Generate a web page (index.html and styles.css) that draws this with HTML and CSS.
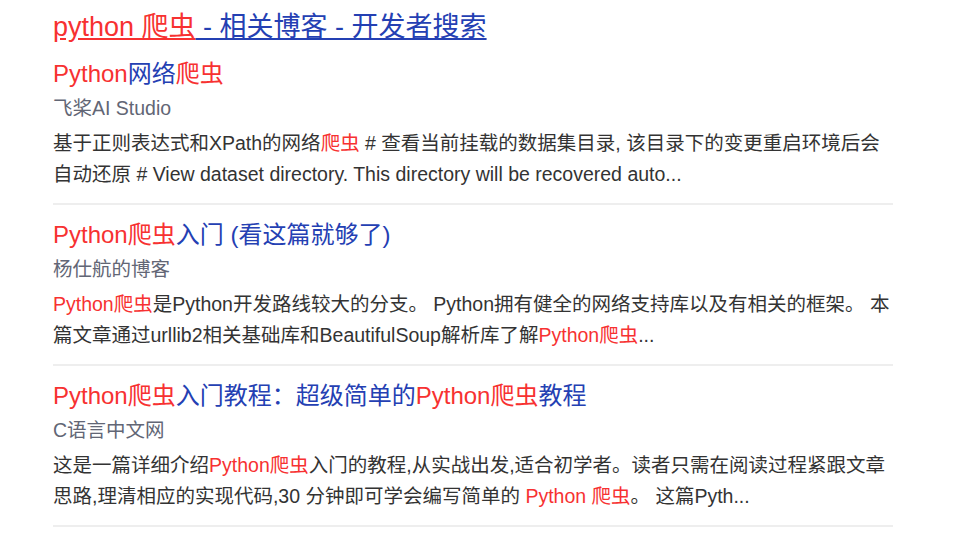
FILE: index.html
```html
<!DOCTYPE html>
<html lang="zh-CN">

<head>
    <meta charset="UTF-8">
    <meta name="viewport" content="width=device-width, initial-scale=1.0">
    <title>python 爬虫 - 相关博客 - 开发者搜索</title>
    <link rel="stylesheet" href="styles.css">
</head>

<body>
    <div class="container">
        <h1 class="search-title">
            <a href="#"><span class="hl">python 爬虫</span><span class="rest"> - 相关博客 - 开发者搜索</span></a>
        </h1>

        <div class="result-list">
            <div class="result">
                <h2 class="result-title"><a href="#"><em>Python</em>网络<em>爬虫</em></a></h2>
                <div class="result-source">飞桨AI Studio</div>
                <p class="result-desc">基于正则表达式和XPath的网络<em>爬虫</em> # 查看当前挂载的数据集目录, 该目录下的变更重启环境后会自动还原 # View dataset directory. This directory will be recovered auto...</p>
            </div>

            <div class="result">
                <h2 class="result-title"><a href="#"><em>Python爬虫</em>入门 (看这篇就够了)</a></h2>
                <div class="result-source">杨仕航的博客</div>
                <p class="result-desc"><em>Python爬虫</em>是Python开发路线较大的分支。 Python拥有健全的网络支持库以及有相关的框架。 本篇文章通过urllib2相关基础库和BeautifulSoup解析库了解<em>Python爬虫</em>...</p>
            </div>

            <div class="result">
                <h2 class="result-title"><a href="#"><em>Python爬虫</em>入门教程：超级简单的<em>Python爬虫</em>教程</a></h2>
                <div class="result-source">C语言中文网</div>
                <p class="result-desc">这是一篇详细介绍<em>Python爬虫</em>入门的教程,从实战出发,适合初学者。读者只需在阅读过程紧跟文章思路,理清相应的实现代码,30 分钟即可学会编写简单的 <em>Python 爬虫</em>。 这篇Pyth...</p>
            </div>
        </div>
    </div>
</body>

</html>
```

FILE: styles.css
```css
body {
    font-family: "Liberation Sans", Arial, "Noto Sans CJK SC", sans-serif;
    margin: 0;
    padding: 0;
    background-color: #fff;
    color: #333;
}

.container {
    width: 840px;
    padding: 10px 0 0 53px;
}

em {
    font-style: normal;
    color: #f73131;
}

.search-title {
    margin: 0;
    font-size: 27px;
    font-weight: normal;
    line-height: 34px;
}

.search-title a {
    text-decoration: none;
}

.search-title .hl {
    color: #f73131;
    text-decoration: underline;
}

.search-title .rest {
    color: #2440b3;
    text-decoration: underline;
}

.result {
    padding: 14px 0 13px;
    border-bottom: 2px solid #eee;
}

.result-title {
    margin: 0 0 5px;
    font-size: 24px;
    font-weight: normal;
    line-height: 32px;
}

.result-title a {
    color: #2440b3;
    text-decoration: none;
}

.result-source {
    font-size: 19.5px;
    line-height: 26px;
    color: #626675;
}

.result-desc {
    margin: 7px 0 0;
    font-size: 19.5px;
    line-height: 31px;
    color: #333;
}
```
